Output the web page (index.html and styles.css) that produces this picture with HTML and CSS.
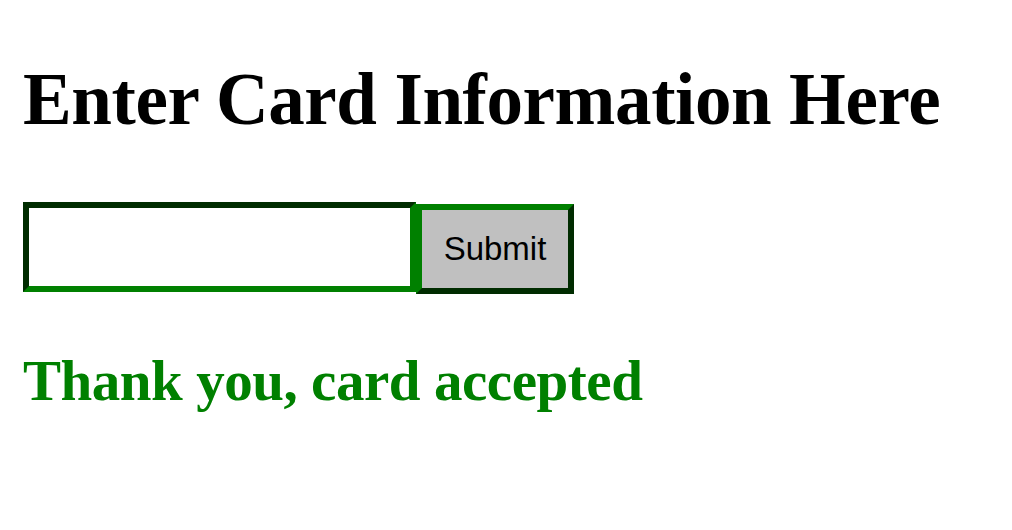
FILE: index.html
```html
<!DOCTYPE html>
<html>
<head>
<meta charset="utf-8">
<link rel="stylesheet" href="styles.css">
</head>
<body>
<main class="page">
  <h1 class="title">Enter Card Information Here</h1>
  <form class="card-form">
    <input class="card-input" type="text">
    <button class="submit-btn" type="button">Submit</button>
  </form>
  <h2 class="status">Thank you, card accepted</h2>
</main>
</body>
</html>
```
FILE: styles.css
```css
html, body {
  margin: 0;
  padding: 0;
  background: #ffffff;
}
.page {
  padding: 0 23px;
  font-family: "Liberation Serif", "Times New Roman", serif;
  display: flex;
  flex-direction: column;
  align-items: flex-start;
}
.title {
  font-size: 73px;
  font-weight: bold;
  line-height: 85px;
  margin: 57px 0 0 0;
  color: #000;
  letter-spacing: -0.4px;
}
.card-form {
  display: flex;
  align-items: flex-start;
  margin-top: 60px;
}
.card-input {
  box-sizing: border-box;
  width: 393px;
  height: 90px;
  margin: 0;
  padding: 0 10px;
  border: 6px solid;
  border-color: #002c00 #008000 #008000 #002c00;
  background: #fff;
  font-size: 30px;
  outline: none;
}
.submit-btn {
  box-sizing: border-box;
  width: 158px;
  height: 90px;
  margin: 2px 0 0 0;
  padding: 0;
  border: 6px solid;
  border-color: #008000 #002c00 #002c00 #008000;
  background: #c0c0c0;
  color: #000;
  font-family: "Liberation Sans", Arial, sans-serif;
  font-size: 33px;
}
.status {
  font-size: 57px;
  font-weight: bold;
  line-height: 64px;
  margin: 55px 0 0 0;
  color: #008000;
  letter-spacing: -0.45px;
}
```
